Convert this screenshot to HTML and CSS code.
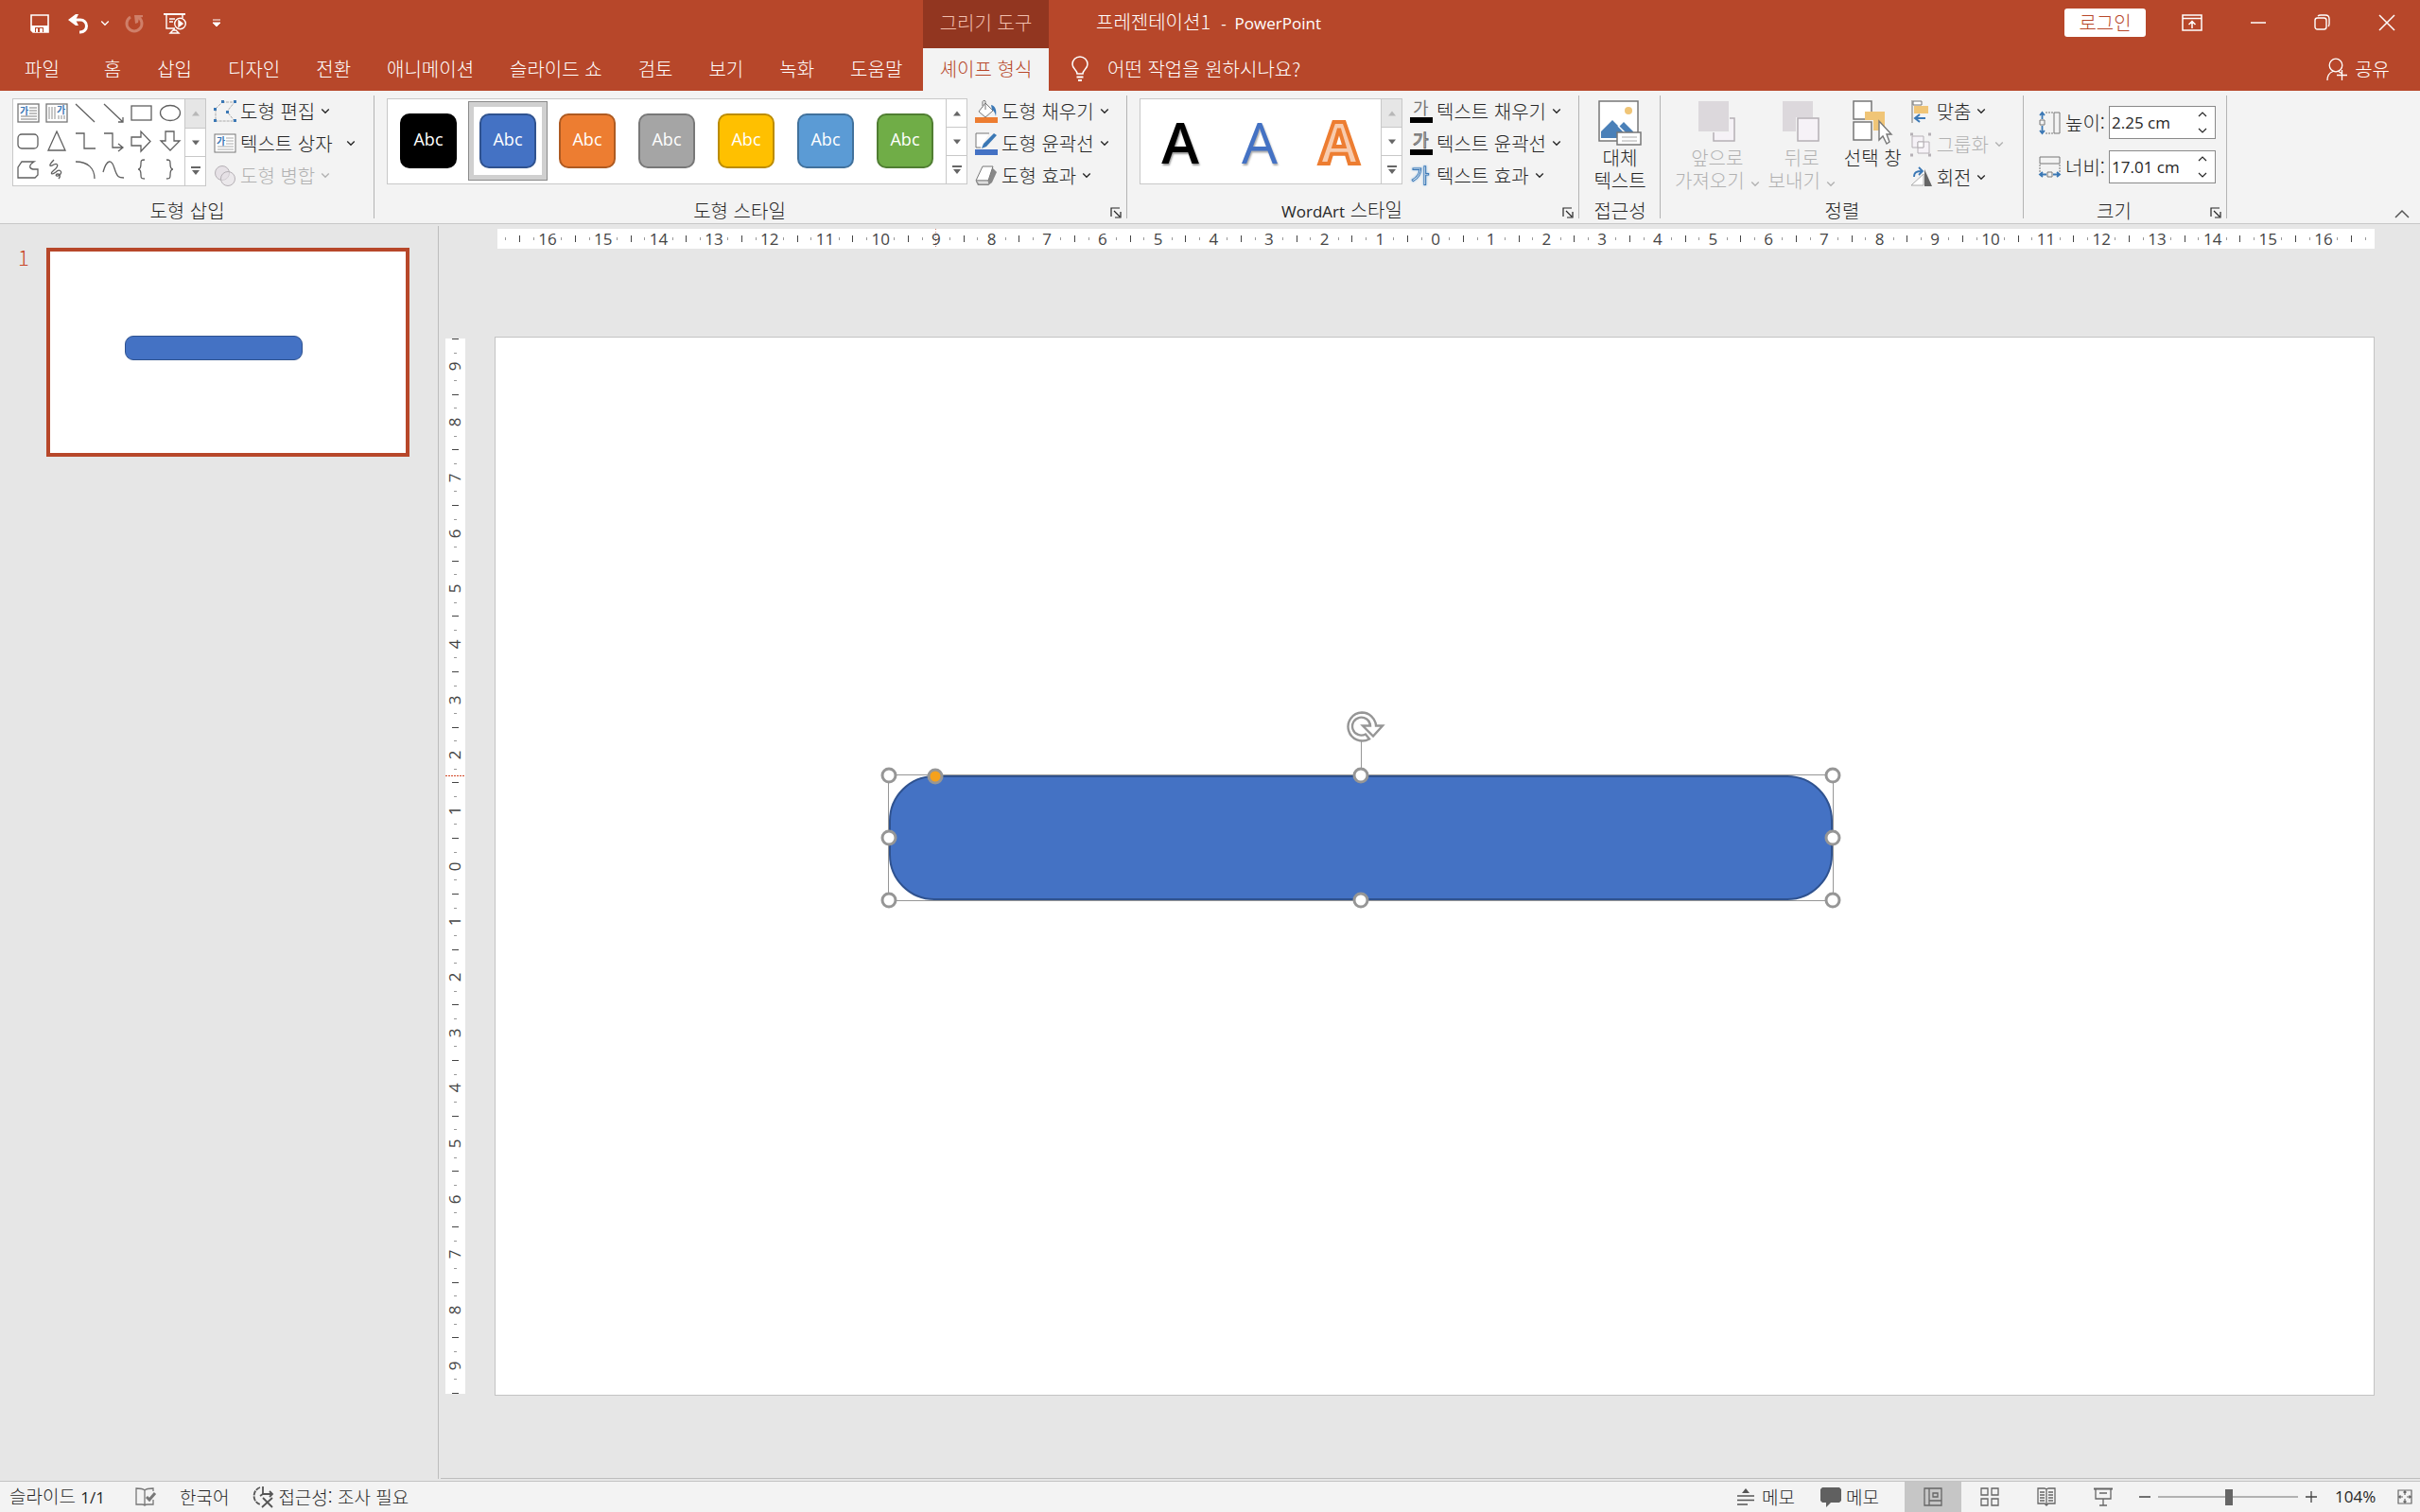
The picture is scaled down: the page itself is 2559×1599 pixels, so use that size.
FILE: index.html
```
<!DOCTYPE html>
<html lang="ko">
<head>
    <meta charset="UTF-8">
    <meta name="viewport" content="width=device-width, initial-scale=1.0">
    <title>프레젠테이션1 - PowerPoint</title>
    <link rel="stylesheet" href="styles.css">
</head>
<body>
    <svg class="defs" aria-hidden="true">
        <symbol id="chev" viewBox="0 0 8 6"><path d="M1 1l3 3 3-3" fill="none" stroke="currentColor" stroke-width="1.1"/></symbol>
        <symbol id="up" viewBox="0 0 10 6"><path d="M1 5.500L5 0.500l4 5z" fill="currentColor"/></symbol>
        <symbol id="down" viewBox="0 0 10 6"><path d="M1 .5L5 5.500l4-5z" fill="currentColor"/></symbol>
        <symbol id="more" viewBox="0 0 10 10"><path d="M0 0h10v2H0zM1 4h8L5 9z" fill="currentColor"/></symbol>
        <symbol id="launch" viewBox="0 0 12 12"><path d="M1 10V1h9M4 4l6 6M11 5v6H5" fill="none" stroke="currentColor" stroke-width="1.2"/></symbol>
        <symbol id="spin-up" viewBox="0 0 10 6"><path d="M1 5l4-4 4 4" fill="none" stroke="currentColor" stroke-width="1.2"/></symbol>
        <symbol id="spin-down" viewBox="0 0 10 6"><path d="M1 1l4 4 4-4" fill="none" stroke="currentColor" stroke-width="1.2"/></symbol>
    </svg>

    <!-- Title bar and tabs -->
    <header class="header">
        <div class="quick">
            <button class="bare" aria-label="저장"><svg width="20" height="20" viewBox="0 0 20 20"><path d="M1 1h18v18H3l-2-2z" fill="none" stroke="#fff" stroke-width="1.600"/><path d="M1 12h18v7H3l-2-2z" fill="#fff"/><path d="M5 14h9v5H5z" fill="#b7472a"/><path d="M6 15h2v4H6zM10 15h3v4h-3z" fill="#fff"/></svg></button>
            <button class="bare undo" aria-label="실행 취소"><svg width="24" height="22" viewBox="0 0 24 22"><path d="M5 7h8a6.500 6.500 0 0 1 0 13h-1" fill="none" stroke="#fff" stroke-width="3"/><path d="M0 7l8-6h3L8 7l3 6H8z" fill="#fff"/></svg></button>
            <button class="bare undo-menu" aria-label="실행 취소 목록"><svg class="chev"><use href="#chev"/></svg></button>
            <button class="bare redo" aria-label="다시 실행"><svg width="22" height="22" viewBox="0 0 22 22"><path d="M7 4a8 8 0 1 0 8 0" fill="none" stroke="#cf7f69" stroke-width="3"/><path d="M11 2h9v2l-4 1-1 5-3 1z" fill="#cf7f69"/></svg></button>
            <button class="bare show" aria-label="처음부터 시작"><svg width="24" height="24" viewBox="0 0 24 24" fill="none" stroke="#fff" stroke-width="1.400"><path d="M0 2h23" stroke-width="2"/><path d="M3 3v14h9M20 3v3M6 7h6M6 10h4M11 17v2M7 22l3-3h3l3 3z"/><circle cx="17.500" cy="12" r="5.800"/><path d="M16 9v6l4-3z" fill="#fff"/></svg></button>
            <button class="bare more" aria-label="빠른 실행 도구 모음 사용자 지정"><svg width="8" height="9" viewBox="0 0 8 9"><path d="M0 1h8M0 4h8L4 8z" stroke="#fff" fill="#fff"/></svg></button>
        </div>
        <div class="context">그리기 도구</div>
        <div class="title-row">
            <span>프레젠테이션1&nbsp; <span class="latin">-&nbsp; PowerPoint</span></span>
            <div class="window">
                <button class="login">로그인</button>
                <button class="bare" aria-label="리본 메뉴 표시 옵션"><svg width="22" height="18" viewBox="0 0 22 18" fill="none" stroke="#fff" stroke-width="1.500"><path d="M1 1h20v16H1zM1 4.500h20M11 15V8M7.500 11L11 7.500l3.500 3.500"/></svg></button>
                <button class="bare" aria-label="최소화"><svg width="18" height="18" viewBox="0 0 18 18"><path d="M1 9h16" stroke="#fff" stroke-width="1.500"/></svg></button>
                <button class="bare" aria-label="이전 크기로"><svg width="18" height="18" viewBox="0 0 18 18" fill="none" stroke="#fff" stroke-width="1.400"><rect x="1" y="4" width="12" height="12" rx="2.500"/><path d="M4 2c1-1 2-1 3-1h5c3 0 4 2 4 4v5c0 1 0 2-1 3"/></svg></button>
                <button class="bare" aria-label="닫기"><svg width="18" height="18" viewBox="0 0 18 18"><path d="M1 1l16 16M17 1L1 17" stroke="#fff" stroke-width="1.500"/></svg></button>
            </div>
        </div>
        <nav class="tabs">
            <a class="file" href="#">파일</a>
            <a href="#">홈</a>
            <a href="#">삽입</a>
            <a href="#">디자인</a>
            <a href="#">전환</a>
            <a href="#">애니메이션</a>
            <a href="#">슬라이드 쇼</a>
            <a href="#">검토</a>
            <a href="#">보기</a>
            <a href="#">녹화</a>
            <a href="#">도움말</a>
        </nav>
        <a class="tab-active" href="#">셰이프 형식</a>
        <div class="tell-row">
            <button class="bare tell"><svg width="18" height="26" viewBox="0 0 18 26" fill="none" stroke="#fff" stroke-width="1.500"><path d="M6 18c0-4-5-5-5-10a8 8 0 0 1 16 0c0 5-5 6-5 10z"/><path d="M5.500 21.500h7M7 25h4" stroke-width="2"/></svg>어떤 작업을 원하시나요?</button>
            <button class="bare share"><svg width="22" height="24" viewBox="0 0 22 24" fill="none" stroke="#fff" stroke-width="1.300"><circle cx="10" cy="8" r="6.800"/><path d="M1 24c0-5 2-8 6-9.500M13 14.500l3 2M11 18.500h11M16.500 13v11"/></svg>공유</button>
        </div>
    </header>

    <!-- Ribbon -->
    <section class="ribbon">
        <div class="group insert">
            <div class="group-body">
                <div class="gallery shapes">
                    <div class="shape-grid">
                        <button aria-label="텍스트 상자"><svg class="ico"><rect x="1" y="2" width="22" height="19" fill="#fff" stroke="#777"/><path d="M13 6h8M13 9h8M13 12h8M4 15h17M4 18h17" stroke="#aaa"/><text x="3" y="13" class="ga">가</text></svg></button>
                        <button aria-label="세로 텍스트 상자"><svg class="ico"><rect x="1" y="2" width="22" height="19" fill="#fff" stroke="#777"/><path d="M4 5v13M7 5v13M10 5v13M14 14v4M17 14v4M20 14v4" stroke="#aaa"/><text x="12" y="12" class="ga">가</text></svg></button>
                        <button aria-label="선"><svg class="ico"><path d="M2 2l20 19"/></svg></button>
                        <button aria-label="선 화살표"><svg class="ico"><path d="M2 2l20 19M22 16v5h-5"/></svg></button>
                        <button aria-label="직사각형"><svg class="ico"><rect x="1" y="4" width="21" height="15"/></svg></button>
                        <button aria-label="타원"><svg class="ico"><ellipse cx="12" cy="11.500" rx="10.500" ry="8"/></svg></button>
                        <button aria-label="둥근 사각형"><svg class="ico"><rect x="1" y="4" width="21" height="15" rx="4"/></svg></button>
                        <button aria-label="삼각형"><svg class="ico"><path d="M12 1l9 20H3z"/></svg></button>
                        <button aria-label="꺾인 연결선"><svg class="ico"><path d="M2 3h9v16h12"/></svg></button>
                        <button aria-label="꺾인 화살표"><svg class="ico"><path d="M2 3h9v15h11M17 14l5 4-5 4"/></svg></button>
                        <button aria-label="오른쪽 화살표"><svg class="ico"><path d="M1 7h10V1l10 10.500L11 22v-6H1z"/></svg></button>
                        <button aria-label="아래쪽 화살표"><svg class="ico"><path d="M7 1h9v10h6L12 21 2 11h5z"/></svg></button>
                        <button aria-label="자유형"><svg class="ico"><path d="M5 3h13c-5 3-6 7-1 8h5v6l-3 3H1v-11z"/></svg></button>
                        <button aria-label="자유형: 자유 곡선"><svg class="ico"><path d="M9 1c-6 6-5 8 0 5 5-2 5 2 0 6s-2 5 2 2c4-4 8 0 4 3s-5-1-2-1 3 3 1 5"/></svg></button>
                        <button aria-label="원호"><svg class="ico"><path d="M2 3c13 0 20 7 20 18"/></svg></button>
                        <button aria-label="곡선"><svg class="ico"><path d="M1 14C5 0 10 0 13 10s5 10 10 10"/></svg></button>
                        <button aria-label="왼쪽 중괄호"><svg class="ico"><path d="M15 1c-4 0-4 1-4 4s0 6-3 6c3 0 3 3 3 6s0 4 4 4"/></svg></button>
                        <button aria-label="오른쪽 중괄호"><svg class="ico"><path d="M8 1c4 0 4 1 4 4s0 6 3 6c-3 0-3 3-3 6s0 4-4 4"/></svg></button>
                    </div>
                    <div class="scroll">
                        <button class="off" disabled aria-label="위로"><svg class="arrow"><use href="#up"/></svg></button>
                        <button aria-label="아래로"><svg class="arrow"><use href="#down"/></svg></button>
                        <button aria-label="자세히"><svg class="arrow-more"><use href="#more"/></svg></button>
                    </div>
                </div>
                <div class="commands">
                    <button><svg class="ico-cmd" viewBox="0 0 24 24"><path d="M9 2h13l-8 10 8 10H2V9z" fill="none" stroke="#aaa" stroke-dasharray="3 1"/><path d="M8 0h3v3H8zM21 0h3v3h-3zM0 8h3v3H0zM13 11h3v3h-3zM0 20h3v3H0zM21 20h3v3h-3z" fill="#3b78b5"/></svg>도형 편집<svg class="chev"><use href="#chev"/></svg></button>
                    <button class="split"><svg class="ico-cmd" viewBox="0 0 24 24"><rect x="1" y="2" width="22" height="19" fill="#fff" stroke="#777"/><path d="M13 6h8M13 9h8M13 12h8M4 15h17M4 18h17" stroke="#aaa"/><text x="3" y="13" class="ga">가</text></svg>텍스트 상자<svg class="chev"><use href="#chev"/></svg></button>
                    <button disabled><svg class="ico-cmd" viewBox="0 0 24 24" fill="#e6e1e6" stroke="#b5b0b5"><circle cx="9" cy="9" r="7.500"/><circle cx="15" cy="15" r="7.500" fill-opacity=".6"/></svg>도형 병합<svg class="chev"><use href="#chev"/></svg></button>
                </div>
            </div>
            <div class="group-label"><span>도형 삽입</span></div>
        </div>

        <div class="group styles">
            <div class="group-body">
                <div class="gallery">
                    <div class="swatches">
                        <button class="swatch"><span class="black">Abc</span></button>
                        <button class="swatch selected"><span class="blue">Abc</span></button>
                        <button class="swatch"><span class="orange">Abc</span></button>
                        <button class="swatch"><span class="gray">Abc</span></button>
                        <button class="swatch"><span class="gold">Abc</span></button>
                        <button class="swatch"><span class="sky">Abc</span></button>
                        <button class="swatch"><span class="green">Abc</span></button>
                    </div>
                    <div class="scroll">
                        <button aria-label="위로"><svg class="arrow"><use href="#up"/></svg></button>
                        <button aria-label="아래로"><svg class="arrow"><use href="#down"/></svg></button>
                        <button aria-label="자세히"><svg class="arrow-more"><use href="#more"/></svg></button>
                    </div>
                </div>
                <div class="commands">
                    <button><svg class="ico-cmd" viewBox="0 0 24 24"><path d="M0 18h24v6H0z" fill="#ed7d31"/><path d="M11 3l8 8-8 7-7-6z" fill="#fff" stroke="#777"/><path d="M11 10V1c0-1-3-1-3 1v4" fill="none" stroke="#777"/><path d="M17 5c5 1 6 6 5 12-1-4-2-6-4-7z" fill="#3b78b5"/></svg>도형 채우기<svg class="chev"><use href="#chev"/></svg></button>
                    <button><svg class="ico-cmd" viewBox="0 0 24 24"><path d="M0 18h24v6H0z" fill="#4472c4"/><path d="M15 1H1v15h5" fill="#fff" stroke="#777"/><path d="M20 1l3 2L12 15l-5 2 2-5z" fill="#3b78b5"/></svg>도형 윤곽선<svg class="chev"><use href="#chev"/></svg></button>
                    <button><svg class="ico-cmd" viewBox="0 0 24 24"><path d="M18 3l5 5-5 11-4 3H3l-2-4z" fill="#888"/><path d="M8 2h11l-5 15H1z" fill="#fff" stroke="#777"/><path d="M1 17l3 4h11l-1-4z" fill="#ddd" stroke="#888"/></svg>도형 효과<svg class="chev"><use href="#chev"/></svg></button>
                </div>
            </div>
            <div class="group-label"><span>도형 스타일</span><button class="launcher" aria-label="도형 서식"><svg><use href="#launch"/></svg></button></div>
        </div>

        <div class="group wordart">
            <div class="group-body">
                <div class="gallery">
                    <div class="letters">
                        <button class="letter-black">A</button>
                        <button class="letter-blue">A</button>
                        <button class="letter-orange">A</button>
                    </div>
                    <div class="scroll">
                        <button class="off" disabled aria-label="위로"><svg class="arrow"><use href="#up"/></svg></button>
                        <button aria-label="아래로"><svg class="arrow"><use href="#down"/></svg></button>
                        <button aria-label="자세히"><svg class="arrow-more"><use href="#more"/></svg></button>
                    </div>
                </div>
                <div class="commands">
                    <button><svg class="ico-cmd" viewBox="0 0 24 24"><text x="3" y="15" class="ga-fill">가</text><path d="M0 18h24v6H0z"/></svg>텍스트 채우기<svg class="chev"><use href="#chev"/></svg></button>
                    <button><svg class="ico-cmd" viewBox="0 0 24 24"><text x="3" y="15" class="ga-line">가</text><path d="M0 18h24v6H0z"/></svg>텍스트 윤곽선<svg class="chev"><use href="#chev"/></svg></button>
                    <button><svg class="ico-cmd" viewBox="0 0 24 24"><text x="1" y="19" class="ga-glow">가</text></svg>텍스트 효과<svg class="chev"><use href="#chev"/></svg></button>
                </div>
            </div>
            <div class="group-label"><span><span class="latin">WordArt</span> 스타일</span><button class="launcher" aria-label="텍스트 효과 서식"><svg><use href="#launch"/></svg></button></div>
        </div>

        <div class="group access">
            <div class="group-body">
                <button class="big"><svg width="46" height="48" viewBox="0 0 46 48"><rect x="1" y="1" width="41" height="42" fill="#fff" stroke="#777" stroke-width="1.500"/><circle cx="32" cy="11" r="4" fill="#f0c577"/><path d="M3 40v-7l12-12 7 7 5-5 10 10v7z" fill="#4a80b8"/><path d="M21 27l9 9" stroke="#fff" stroke-width="1.500"/><path d="M20 34h25v13H20z" fill="#fff" stroke="#777" stroke-width="1.500"/><path d="M25 39h16M25 43h16" stroke="#aaa"/></svg><span>대체</span><span>텍스트</span></button>
            </div>
            <div class="group-label"><span>접근성</span></div>
        </div>

        <div class="group arrange">
            <div class="group-body">
                <button class="big forward" disabled><svg width="40" height="48" viewBox="0 0 40 48"><path d="M16 19h22v24H16z" fill="#f6f2f7" stroke="#b5b0b5" stroke-width="1.500"/><path d="M0 1h33v33H0z" fill="#f3f3f3"/><path d="M0 1h32v32H0z" fill="#dcd8dc"/></svg><span>앞으로</span><span>가져오기<svg class="chev"><use href="#chev"/></svg></span></button>
                <button class="big backward" disabled><svg width="40" height="48" viewBox="0 0 40 48"><path d="M0 1h32v32H0z" fill="#dcd8dc"/><path d="M14 18h26v28H14z" fill="#f3f3f3"/><path d="M16 19h22v24H16z" fill="#f6f2f7" stroke="#b5b0b5" stroke-width="1.500"/></svg><span>뒤로</span><span>보내기<svg class="chev"><use href="#chev"/></svg></span></button>
                <button class="big pane"><svg width="42" height="48" viewBox="0 0 42 48"><path d="M1 1h19v19H1zM1 23h19v19H1z" fill="#fff" stroke="#777" stroke-width="1.500"/><path d="M13 12h21v20H22V21h-9z" fill="#f0c577"/><path d="M28 22v20l4-4 4 8 3-2-3-8h5z" fill="#fff" stroke="#777" stroke-width="1.400"/></svg><span>선택 창</span></button>
                <div class="commands loose">
                    <button><svg class="ico-cmd" viewBox="0 0 24 24"><path d="M2 0v24" stroke="#777"/><path d="M3 1h9v4H3z" fill="#fff" stroke="#777"/><path d="M4 6h15v8H4z" fill="#f0c577"/><path d="M16 19H6M10 15l-5 4 5 4" fill="none" stroke="#3b78b5" stroke-width="2"/></svg>맞춤<svg class="chev"><use href="#chev"/></svg></button>
                    <button disabled><svg class="ico-cmd" viewBox="0 0 24 24" fill="#f6f2f7" stroke="#b5b0b5"><path d="M2 3h12v12H2zM8 9h12v12H8z"/><path d="M8 9h6v6H8z" fill="#fff"/><path d="M0 1h3M19 1h3M0 23h3M19 23h3" stroke-width="3"/></svg>그룹화<svg class="chev"><use href="#chev"/></svg></button>
                    <button><svg class="ico-cmd" viewBox="0 0 24 24"><path d="M1 20h13V8z" fill="#fff" stroke="#aaa"/><path d="M15 3v18h8z" fill="#666"/><path d="M4 11c0-5 3-6 8-6M9 1l4 4-4 4" fill="none" stroke="#3b78b5" stroke-width="1.800"/></svg>회전<svg class="chev"><use href="#chev"/></svg></button>
                </div>
            </div>
            <div class="group-label"><span>정렬</span></div>
        </div>

        <div class="group size">
            <div class="group-body">
                <div class="field">
                    <svg class="ico-cmd" viewBox="0 0 24 24" fill="none" stroke="#777"><path d="M16 1h6v22h-6z"/><path d="M7 1h9M7 23h9" stroke-dasharray="2 1"/><path d="M1 9h5v5H1z"/><path d="M3.500 8V1M3.500 15v8M1 4l2.500-3L6 4M1 20l2.500 3L6 20" stroke="#3b78b5" stroke-width="1.800"/></svg>
                    <label for="height">높이:</label>
                    <div class="spin"><input id="height" type="text" value="2.25 cm"><div class="spin-buttons"><button aria-label="높이 늘리기"><svg><use href="#spin-up"/></svg></button><button aria-label="높이 줄이기"><svg><use href="#spin-down"/></svg></button></div></div>
                </div>
                <div class="field">
                    <svg class="ico-cmd" viewBox="0 0 24 24" fill="none" stroke="#777"><path d="M1 1h21v7H1z"/><path d="M1 9v9M22 9v9" stroke-dasharray="2 1"/><path d="M9 17h5v5H9z"/><path d="M8 19.500H1M15 19.500h7M4 17l-3 2.500L4 22M19 17l3 2.500-3 2.500" stroke="#3b78b5" stroke-width="1.800"/></svg>
                    <label for="width">너비:</label>
                    <div class="spin"><input id="width" type="text" value="17.01 cm"><div class="spin-buttons"><button aria-label="너비 늘리기"><svg><use href="#spin-up"/></svg></button><button aria-label="너비 줄이기"><svg><use href="#spin-down"/></svg></button></div></div>
                </div>
            </div>
            <div class="group-label"><span>크기</span><button class="launcher" aria-label="크기 및 위치"><svg><use href="#launch"/></svg></button></div>
        </div>
        <button class="bare collapse" aria-label="리본 메뉴 축소"><svg width="16" height="10" viewBox="0 0 16 10"><path d="M1 9l7-7 7 7" fill="none" stroke="#555" stroke-width="1.500"/></svg></button>
    </section>

    <!-- Thumbnails and slide -->
    <main class="work">
        <aside class="thumbs">
            <span class="thumb-number">1</span>
            <a class="thumb" href="#" aria-label="슬라이드 1"><span class="thumb-shape"></span></a>
        </aside>
        <section class="editor">
            <div class="ruler ruler-h" id="rulerH"></div>
            <div class="ruler ruler-v" id="rulerV"></div>
            <div class="slide">
                <div class="shape">
                    <div class="fill"></div>
                    <svg class="rotate" width="40" height="34" viewBox="0 0 40 34"><path d="M16 1.500a15 15 0 1 0 8 28l-4-5a9.500 9.500 0 1 1 5-9h-8l11 11 10-11h-7A15 15 0 0 0 16 1.500z" fill="#fff" stroke="#969696" stroke-width="2.400"/></svg>
                    <span class="stem"></span>
                    <span class="handle top left"></span>
                    <span class="handle top center"></span>
                    <span class="handle top right"></span>
                    <span class="handle middle left"></span>
                    <span class="handle middle right"></span>
                    <span class="handle bottom left"></span>
                    <span class="handle bottom center"></span>
                    <span class="handle bottom right"></span>
                    <span class="handle adjust"></span>
                </div>
            </div>
        </section>
    </main>

    <!-- Status bar -->
    <footer class="status">
        <span>슬라이드 <span class="latin">1/1</span></span>
        <button class="bare spell" aria-label="맞춤법 검사"><svg width="22" height="22" viewBox="0 0 22 22" fill="none" stroke="#777" stroke-width="1.300"><path d="M10 20V4C8 2 5 2 1 2v17h6c1 0 2 0 3 1 1-1 2-1 3-1h6v-5M10 4c2-2 4-2 9-2v3"/><path d="M12 11l3 3 6-7" stroke-width="3"/></svg></button>
        <button class="bare">한국어</button>
        <button class="bare check"><svg width="22" height="24" viewBox="0 0 22 24" fill="none" stroke="#555" stroke-width="1.800"><path d="M7 2A9.500 9.500 0 0 0 7 20" stroke-dasharray="5 1"/><path d="M10 1v8l-3 2M9 9h11M17 6l3 3-3 3M10 13l10 10M20 13L9 23" /></svg>접근성: 조사 필요</button>
        <div class="status-right">
            <button class="bare notes"><svg width="18" height="20" viewBox="0 0 18 20"><path d="M9 1l4 5H5z" fill="#555"/><path d="M0 9h18M0 13.500h18M0 18h11" stroke="#555" stroke-width="1.500"/></svg>메모</button>
            <button class="bare comments"><svg width="22" height="22" viewBox="0 0 22 22"><path d="M2 1h18l2 2v12l-2 2h-9l-5 5v-5H2l-2-2V3z" fill="#606060"/></svg>메모</button>
            <button class="bare view on" aria-label="기본"><svg width="20" height="20" viewBox="0 0 20 20" fill="none" stroke="#666" stroke-width="1.300"><path d="M1 1h18v18H1zM6 1v18M6 14h13M10 6h5v4h-5z"/></svg></button>
            <button class="bare view" aria-label="여러 슬라이드"><svg width="20" height="20" viewBox="0 0 20 20" fill="none" stroke="#666" stroke-width="1.300"><path d="M1 1h7v7H1zM12 1h7v7h-7zM1 12h7v7H1zM12 12h7v7h-7z"/></svg></button>
            <button class="bare view" aria-label="읽기용 보기"><svg width="20" height="20" viewBox="0 0 20 20" fill="none" stroke="#666" stroke-width="1.300"><path d="M10 19V2L8 1H1v16h7l2 2 2-2h7V1h-7l-2 1M3 5h5M3 8h5M3 11h5M3 14h5M12 5h5M12 8h5M12 11h5M12 14h5"/></svg></button>
            <button class="bare view" aria-label="슬라이드 쇼"><svg width="20" height="20" viewBox="0 0 20 20" fill="none" stroke="#666" stroke-width="1.300"><path d="M0 1.500h20" stroke-width="2"/><path d="M2 2v10h16V2M6 6h8M10 12v7M6 19h8"/></svg></button>
            <button class="bare zoom-out" aria-label="축소"><svg width="14" height="14" viewBox="0 0 14 14"><path d="M1 7h12" stroke="#444" stroke-width="1.500"/></svg></button>
            <input class="zoom" type="range" min="0" max="100" value="51" aria-label="확대/축소">
            <button class="bare" aria-label="확대"><svg width="14" height="14" viewBox="0 0 14 14"><path d="M1 7h12M7 1v12" stroke="#444" stroke-width="1.300"/></svg></button>
            <button class="bare percent latin">104%</button>
            <button class="bare" aria-label="창에 맞춤"><svg width="16" height="16" viewBox="0 0 16 16" fill="none" stroke="#666" stroke-width="1.200"><path d="M1 1h14v14H1zM8 2v4M8 10v4M2 8h4M10 8h4M6.500 3.500L8 2l1.500 1.500M6.500 12.500L8 14l1.500-1.500M3.500 6.500L2 8l1.500 1.500M12.500 6.500L14 8l-1.500 1.500"/></svg></button>
        </div>
    </footer>

    <script>
        // Rulers: one mark for each quarter of a centimetre, numbers on the whole ones
        function drawRuler(id, from, to, cursor) {
            const ruler = document.getElementById(id);
            for (let q = from; q <= to; q++) {
                const mark = document.createElement('span');
                if (q % 4 === 0) {
                    mark.className = 'mark number';
                    mark.textContent = Math.abs(q / 4);
                } else {
                    mark.className = q % 2 === 0 ? 'mark half' : 'mark quarter';
                }
                if (q === cursor) {
                    mark.className += ' cursor';
                }
                ruler.appendChild(mark);
            }
        }
        drawRuler('rulerH', -67, 67, -36);
        drawRuler('rulerV', -38, 38, -7);
    </script>
</body>
</html>
```
FILE: styles.css
```
* {
    box-sizing: border-box;
}
body {
    display: flex;
    flex-direction: column;
    min-height: 100vh;
    margin: 0;
    background-color: #e6e6e6;
    color: #262626;
    font-family: "Noto Sans CJK KR", sans-serif;
    font-size: 20px;
    font-weight: 300;
    line-height: 24px;
}
button, input {
    padding: 0;
    border: none;
    background: none;
    color: inherit;
    font: inherit;
}
button {
    white-space: nowrap;
}
button:disabled {
    color: #b1b1b1;
}
a {
    color: inherit;
    text-decoration: none;
}
svg {
    flex: none;
    overflow: visible;
}
.defs {
    display: none;
}
.latin {
    font-family: "Open Sans", sans-serif;
    font-size: 17px;
    font-weight: 400;
}
.bare {
    display: flex;
    align-items: center;
}
.chev {
    width: 10px;
    height: 8px;
}

/* Header */
.header {
    display: grid;
    grid-template-columns: 976px 133px 1fr;
    grid-template-rows: 51px 45px;
    background-color: #b7472a;
    color: #fff;
}
.quick {
    display: flex;
    align-items: center;
    padding-left: 32px;
    padding-bottom: 2px;
}
.undo {
    margin-left: 20px;
}
.undo-menu {
    margin-left: 10px;
}
.redo {
    margin-left: 15px;
}
.show {
    margin-left: 20px;
}
.more {
    margin-left: 28px;
}
.context {
    display: flex;
    align-items: center;
    justify-content: center;
    padding-bottom: 3px;
    background-color: #923620;
    color: #f2bfae;
}
.title-row, .tell-row {
    display: flex;
    align-items: center;
    justify-content: space-between;
}
.title-row {
    padding-left: 50px;
    padding-right: 26px;
    padding-bottom: 4px;
}
.window {
    display: flex;
    align-items: center;
    gap: 50px;
}
.login {
    width: 86px;
    height: 30px;
    margin-right: -12px;
    border-radius: 3px;
    background-color: #fff;
    color: #b7472a;
}
.tabs {
    display: flex;
    align-items: center;
    padding-bottom: 2px;
}
.tabs a {
    padding: 0 19px;
}
.tabs .file {
    padding-left: 26px;
    padding-right: 28px;
}
.tab-active {
    display: flex;
    align-items: center;
    justify-content: center;
    padding-bottom: 2px;
    background-color: #f3f3f3;
    color: #b7472a;
}
.tell-row {
    padding-left: 24px;
    padding-right: 32px;
    padding-bottom: 2px;
}
.tell {
    gap: 20px;
}
.share {
    gap: 8px;
}

/* Ribbon */
.ribbon {
    display: flex;
    height: 141px;
    border-bottom: 1px solid #c8c8c8;
    background-color: #f3f3f3;
}
.group {
    display: flex;
    flex-direction: column;
    position: relative;
}
.group::after {
    content: "";
    position: absolute;
    top: 5px;
    right: 0;
    bottom: 5px;
    width: 1px;
    background-color: #b4b4b4;
}
.insert {
    width: 396px;
}
.styles {
    width: 796px;
}
.wordart {
    width: 478px;
}
.access {
    width: 86px;
}
.arrange {
    width: 384px;
}
.size {
    width: 215px;
}
.group-body {
    display: flex;
    flex: 1;
    align-items: flex-start;
    gap: 8px;
    padding: 8px 0 0 13px;
}
.group-label {
    display: flex;
    align-items: center;
    height: 26px;
}
.group-label > span {
    flex: 1;
    text-align: center;
}
.launcher {
    display: flex;
    width: 24px;
    padding: 4px 0 0 6px;
}
.launcher svg {
    width: 12px;
    height: 12px;
}
.gallery {
    display: flex;
    height: 91px;
    border: 1px solid #c8c8c8;
    background-color: #fff;
}
.shapes {
    height: 93px;
}
.shape-grid {
    display: grid;
    grid-template-columns: repeat(6, 30px);
    grid-template-rows: repeat(3, 30px);
    padding-left: 1px;
}
.shape-grid button {
    display: grid;
    place-items: center;
}
.ico {
    width: 24px;
    height: 24px;
    fill: none;
    stroke: #606060;
    stroke-width: 1.3;
}
.ga {
    fill: #3b78b5;
    stroke: none;
    font-size: 10px;
    font-weight: bold;
}
.ga-fill, .ga-line, .ga-glow {
    fill: #777;
    font-size: 18px;
    font-weight: 400;
}
.ga-line {
    fill: #fff;
    stroke: #666;
}
.ga-glow {
    fill: #fff;
    stroke: #3b78b5;
    font-size: 21px;
    filter: drop-shadow(0 0 1px #7fb0e0);
}
.scroll {
    display: flex;
    flex-direction: column;
    width: 22px;
    margin-left: auto;
    border-left: 1px solid #c8c8c8;
}
.scroll button {
    display: flex;
    flex: 1;
    align-items: center;
    justify-content: center;
    color: #666;
}
.scroll button + button {
    border-top: 1px solid #c8c8c8;
}
.scroll .off {
    background-color: #e6e6e6;
    color: #b8b8b8;
}
.arrow {
    width: 10px;
    height: 6px;
}
.arrow-more {
    width: 10px;
    height: 10px;
}
.commands {
    display: flex;
    flex-direction: column;
    gap: 10px;
    padding-top: 2px;
}
.commands button {
    display: flex;
    align-items: center;
}
.loose {
    gap: 11px;
}
.ico-cmd {
    width: 24px;
    height: 24px;
    margin-right: 4px;
}
.commands .chev {
    margin-left: 6px;
}
.commands .split .chev {
    margin-left: 14px;
}
.swatches {
    display: flex;
    width: 590px;
    padding: 2px 0 0 1px;
}
.swatch {
    width: 84px;
    height: 84px;
    padding: 12px;
}
.selected {
    border: 1px solid #8a8a8a;
    padding: 6px;
    background-color: #fff;
    box-shadow: inset 0 0 0 5px #d0d0d0;
}
.selected span {
    margin: 5px;
}
.swatch span {
    display: block;
    height: 58px;
    border: 2px solid;
    border-radius: 10px;
    color: #fff;
    font-family: "Open Sans", sans-serif;
    font-size: 18px;
    font-weight: 400;
    line-height: 50px;
}
.swatch .black { background-color: #000; border-color: #000; }
.swatch .blue { background-color: #4472c4; border-color: #2f528f; }
.swatch .orange { background-color: #ed7d31; border-color: #ae5a21; }
.swatch .gray { background-color: #a5a5a5; border-color: #787878; }
.swatch .gold { background-color: #ffc000; border-color: #bc8c00; }
.swatch .sky { background-color: #5b9bd5; border-color: #41719c; }
.swatch .green { background-color: #70ad47; border-color: #507e32; }
.letters {
    display: flex;
    width: 254px;
}
.letters button {
    width: 84px;
    font-family: "Open Sans", sans-serif;
    font-size: 60px;
    line-height: 88px;
}
.letters .letter-black {
    color: #000;
    font-weight: 600;
    text-shadow: 1px 2px 2px #999;
}
.letters .letter-blue {
    color: #4472c4;
    font-weight: 500;
    text-shadow: 1px 2px 2px #aaa;
}
.letters .letter-orange {
    color: #f8cbad;
    font-weight: 700;
    -webkit-text-stroke: 4px #ed7d31;
}
.big {
    display: flex;
    flex-direction: column;
    align-items: center;
}
.big > svg {
    margin: 2px 0 1px;
}
.big .chev {
    margin-left: 6px;
}
.access .group-body {
    justify-content: center;
    padding-left: 0;
}
.arrange .group-body {
    padding-left: 15px;
    gap: 9px;
}
.size .group-body {
    flex-direction: column;
    gap: 12px;
    padding: 16px 12px 0 16px;
}
.field {
    display: flex;
    align-items: center;
    align-self: stretch;
}
.spin {
    display: flex;
    width: 113px;
    height: 35px;
    margin-left: auto;
    border: 1px solid #8a8a8a;
    background-color: #fff;
}
.spin input {
    flex: 1;
    min-width: 0;
    padding-left: 2px;
    font-family: "Open Sans", sans-serif;
    font-size: 17px;
    font-weight: 400;
}
.spin-buttons {
    display: flex;
    flex-direction: column;
    width: 26px;
}
.spin-buttons button {
    display: flex;
    flex: 1;
    align-items: center;
    justify-content: center;
}
.spin-buttons svg {
    width: 10px;
    height: 6px;
}
.collapse {
    align-items: flex-end;
    margin-left: auto;
    padding: 0 11px 5px 0;
}

/* Work area */
.work {
    display: grid;
    flex: 1;
    grid-template-columns: 464px 1fr;
    padding: 2px 0;
}
.thumbs {
    display: flex;
    align-items: flex-start;
    gap: 18px;
    padding: 23px 30px 0 19px;
    border-right: 1px solid #bdbdbd;
}
.thumb-number {
    width: 12px;
    margin-top: -3px;
    color: #c9472a;
    font-size: 22px;
}
.thumb {
    flex: 1;
    position: relative;
    height: 221px;
    border: 4px solid #b7472a;
    background-color: #fff;
}
.thumb-shape {
    position: absolute;
    left: 21%;
    top: 42%;
    width: 50%;
    height: 12%;
    border: 1px solid #2f528f;
    border-radius: 9px;
    background-color: #4472c4;
}
.editor {
    display: grid;
    grid-template-columns: 21px 1fr;
    grid-template-rows: 21px 1fr;
    column-gap: 31px;
    row-gap: 93px;
    margin-left: 2px;
    padding: 3px 48px 87px 5px;
    border-bottom: 1px solid #bdbdbd;
}
.ruler {
    display: flex;
    justify-content: center;
    overflow: hidden;
    background-color: #fff;
    color: #444;
    font-family: "Open Sans", sans-serif;
    font-size: 17px;
    font-weight: 400;
    line-height: 20px;
}
.ruler-h {
    grid-column: 2;
    margin-left: 3px;
    padding: 0 3px 0 2px;
}
.ruler-v {
    flex-direction: column;
    margin: 2px 0;
}
.mark {
    display: flex;
    flex: 1 0 0;
    min-width: 0;
    min-height: 0;
    align-items: center;
    justify-content: center;
}
.ruler-v .mark {
    flex: 0 0 calc(100% / 76);
}
.ruler-v .number {
    transform: rotate(-90deg);
}
.half::before, .quarter::before {
    content: "";
    width: 1px;
    height: 7px;
    background-color: #444;
}
.quarter::before {
    height: 3px;
    background-color: #999;
}
.ruler-v .half::before {
    width: 7px;
    height: 1px;
}
.ruler-v .quarter::before {
    width: 3px;
    height: 1px;
}
.ruler-h .cursor {
    background: repeating-linear-gradient(#d08070 0 1px, transparent 1px 3px) center / 1px 100% no-repeat;
}
.ruler-v .cursor {
    background: repeating-linear-gradient(90deg, #d24726 0 2px, transparent 2px 3px) center bottom / 100% 1px no-repeat;
}
.slide {
    position: relative;
    border: 1px solid #c3c3c3;
    background-color: #fff;
}

/* Selected shape on the slide */
.shape {
    position: absolute;
    left: 20.9%;
    top: 41.3%;
    width: 50.35%;
    height: 12%;
    border: 1px solid #969696;
}
.fill {
    height: 100%;
    border: 2px solid #2f528f;
    border-radius: 48px;
    background-color: #4472c4;
}
.handle {
    position: absolute;
    width: 17px;
    height: 17px;
    border: 3px solid #969696;
    border-radius: 50%;
    background-color: #fff;
    transform: translate(-50%, -50%);
}
.left { left: 0; }
.center { left: 50%; }
.right { left: 100%; }
.top { top: 0; }
.middle { top: 50%; }
.bottom { top: 100%; }
.adjust {
    left: 49px;
    top: 1px;
    background-color: #f5a11c;
}
.stem {
    position: absolute;
    left: 50%;
    bottom: 100%;
    width: 1px;
    height: 36px;
    background-color: #969696;
}
.rotate {
    position: absolute;
    left: calc(50% - 15px);
    bottom: calc(100% + 34px);
    z-index: 1;
}

/* Status bar */
.status {
    display: flex;
    align-items: center;
    height: 33px;
    padding-left: 10px;
    border-top: 1px solid #c3c3c3;
    background-color: #f3f3f3;
    font-size: 19px;
}
.spell {
    margin: 0 25px 0 32px;
}
.check {
    gap: 4px;
    margin-left: 26px;
}
.status-right {
    display: flex;
    align-items: center;
    height: 100%;
    margin-left: auto;
    padding-right: 8px;
}
.notes {
    gap: 8px;
}
.comments {
    gap: 5px;
    margin: 0 27px;
}
.view {
    justify-content: center;
    width: 60px;
    height: 100%;
}
.on {
    background-color: #c6c6c6;
}
.zoom-out {
    margin: 0 7px;
}
.zoom {
    width: 148px;
    height: 17px;
    margin: 0 7px 0 0;
    appearance: none;
    background: linear-gradient(#b1b1b1, #b1b1b1) center / 100% 2px no-repeat;
}
.zoom::-webkit-slider-thumb {
    width: 8px;
    height: 17px;
    appearance: none;
    background-color: #666;
}
.percent {
    width: 45px;
    margin: 0 21px 0 18px;
}
```
